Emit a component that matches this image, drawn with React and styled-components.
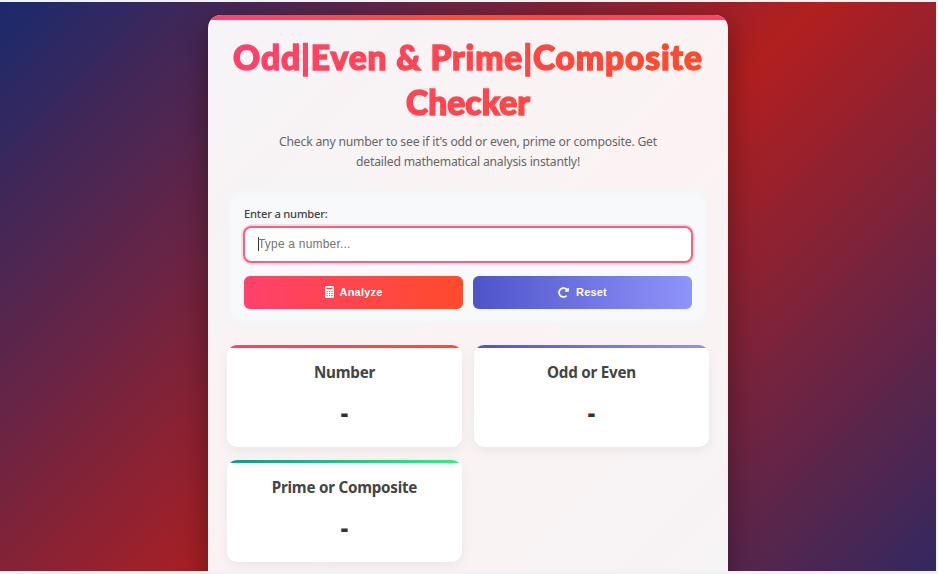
import React from 'react';
import styled, { createGlobalStyle } from 'styled-components';
import { FaRedoAlt } from 'react-icons/fa';

const PINK = 'linear-gradient(to right, #ff416c, #ff4b2b)';
const INDIGO = 'linear-gradient(to right, #4e54c8, #8f94fb)';
const GREEN = 'linear-gradient(to right, #11998e, #38ef7d)';

const GlobalStyle = createGlobalStyle`
  * { box-sizing: border-box; margin: 0; padding: 0; }
  body { margin: 0; overflow: hidden; background: #f0f2f4; font-family: "Noto Sans", "Open Sans", sans-serif; }
`;

const Frame = styled.div`
  width: 938px;
  height: 574px;
  padding: 2px 2px 3px 0;
  background: #f0f2f4;
`;

const Page = styled.main`
  height: 569px;
  overflow: hidden;
  display: flex;
  justify-content: center;
  align-items: flex-start;
  padding-top: 13px;
  background: linear-gradient(135deg, #1a2a6c, #b21f1f, #1a2a6c) 0 0 / 936px 700px no-repeat;
`;

const Card = styled.section`
  flex: none;
  width: 520px;
  height: 660px;
  overflow: hidden;
  border-radius: 13px;
  background: rgba(255, 255, 255, 0.95);
  box-shadow: 0 10px 30px rgba(0, 0, 0, 0.4);
`;

const TopBar = styled.div`
  height: 5px;
  background: linear-gradient(to right, #ff416c, #ff4b2b, #ff416c);
`;

const Content = styled.div`
  padding: 15px 19px 0;
`;

const Title = styled.h1`
  font-family: Lato, "Open Sans", sans-serif;
  font-size: 33.5px;
  font-weight: 900;
  line-height: 45px;
  white-space: nowrap;
  text-align: center;
  color: transparent;
  -webkit-text-stroke: 1.5px transparent;
  background: linear-gradient(to right, #ff416c, #ff4b2b);
  background-clip: text;
  -webkit-background-clip: text;
`;

const TitleLine = styled.span`
  display: block;
  letter-spacing: ${p => p.$spacing};
`;

const Subtitle = styled.p`
  width: 400px;
  margin: 7px auto 0;
  font-size: 12.2px;
  line-height: 20px;
  letter-spacing: -0.2px;
  white-space: nowrap;
  text-align: center;
  color: #666;
`;

const Panel = styled.section`
  height: 135px;
  margin: 18px 1px 0;
  padding: 16px 15px 0;
  border-radius: 12px;
  background: #f8f9fb;
  box-shadow: inset 0 0 8px rgba(0, 0, 0, 0.04);
`;

const Label = styled.label`
  display: block;
  height: 20px;
  padding-left: 1px;
  font-size: 11.2px;
  line-height: 16px;
  letter-spacing: -0.2px;
  font-weight: 500;
  color: #444;
`;

const Field = styled.div`
  display: flex;
  align-items: center;
  height: 37px;
  padding: 0 12px 2px 13px;
  border: 2px solid #ff5c80;
  border-radius: 8px;
  background: #fff;
  box-shadow: 0 0 0 2px rgba(255, 65, 108, 0.13);
  color: #757575;
  font: 12px/16px "Liberation Sans", sans-serif;
  letter-spacing: 0.2px;
`;

const Caret = styled.span`
  width: 1px;
  height: 14px;
  margin-right: -1px;
  background: #333;
`;

const Buttons = styled.div`
  display: grid;
  grid-template-columns: 1fr 1fr;
  gap: 10px;
  margin: 13px 1px 0;
`;

const Button = styled.button`
  display: flex;
  align-items: center;
  justify-content: center;
  gap: ${p => p.$gap}px;
  height: 33px;
  padding-bottom: 1px;
  border: 0;
  border-radius: 6px;
  background: ${p => p.$fill};
  color: #fff;
  font: bold 11px/14px "Liberation Sans", sans-serif;
  letter-spacing: 0.2px;
`;

const Results = styled.div`
  display: grid;
  grid-template-columns: 235px 235px;
  gap: 13px 12px;
  margin-top: 20px;
`;

const ResultCard = styled.article`
  height: 102px;
  overflow: hidden;
  border-radius: 10px;
  background: #fff;
  box-shadow: 0 4px 12px rgba(0, 0, 0, 0.06);
  text-align: center;
`;

const Accent = styled.div`
  height: 3px;
  background: ${p => p.$fill};
`;

const ResultTitle = styled.h2`
  margin-top: 13px;
  font-size: 15.2px;
  line-height: 22px;
  letter-spacing: -0.25px;
  font-weight: 700;
  color: #444;
`;

const ResultValue = styled.p`
  margin-top: 12px;
  font-size: 23px;
  line-height: 34px;
  font-weight: 900;
  color: #333;
`;

const CalculatorIcon = () => (
  <svg width="9" height="12" viewBox="0 0 9 12" fill="none">
    <rect width="9" height="12" rx="1.2" fill="#fff" />
    <path d="M1.5 2.5h6" stroke="#ff4659" strokeWidth="1.4" />
    <path d="M1.5 5.5h6M1.5 7.5h6M1.5 9.5h6" stroke="#ff4659" strokeWidth="1.1" strokeDasharray="1.2 1.2" />
  </svg>
);

const results = [
  { title: 'Number', fill: PINK },
  { title: 'Odd or Even', fill: INDIGO },
  { title: 'Prime or Composite', fill: GREEN },
];

export default function App() {
  return (
    <Frame>
      <GlobalStyle />
      <Page>
        <Card>
          <TopBar />
          <Content>
            <Title>
              <TitleLine $spacing="0.9px">Odd|Even &amp; Prime|Composite</TitleLine>
              <TitleLine $spacing="0.1px">Checker</TitleLine>
            </Title>
            <Subtitle>
              Check any number to see if it's odd or even, prime or composite. Get<br />
              detailed mathematical analysis instantly!
            </Subtitle>
            <Panel>
              <Label>Enter a number:</Label>
              <Field><Caret />Type a number...</Field>
              <Buttons>
                <Button $fill={PINK} $gap={6}><CalculatorIcon />Analyze</Button>
                <Button $fill={INDIGO} $gap={7}><FaRedoAlt size={11} />Reset</Button>
              </Buttons>
            </Panel>
            <Results>
              {results.map(r => (
                <ResultCard key={r.title}>
                  <Accent $fill={r.fill} />
                  <ResultTitle>{r.title}</ResultTitle>
                  <ResultValue>-</ResultValue>
                </ResultCard>
              ))}
            </Results>
          </Content>
        </Card>
      </Page>
    </Frame>
  );
}
